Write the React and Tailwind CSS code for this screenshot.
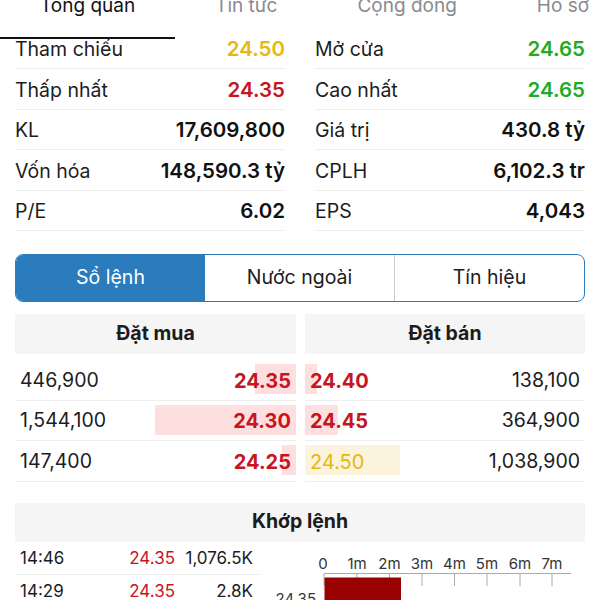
import React from "react";

const RED = "text-[#c8141e]";

function StatCell({ label, value, color, first }) {
  return (
    <div
      className={`flex justify-between items-center border-b border-[#eeeeee] ${
        first ? "h-[30px] pb-[8px]" : "h-[40.5px] pt-[3px]"
      }`}
    >
      <span className="text-[19.5px] text-[#1c1c1e]">{label}</span>
      <span className={`text-[20.5px] font-semibold ${color || "text-[#111111]"}`}>{value}</span>
    </div>
  );
}

function BookRow({ bv, bp, bw, bc, sp, sv, sw, sc, sbg }) {
  return (
    <div className="grid grid-cols-[281px_280px] gap-x-[9px]">
      <div className="relative h-[40.5px] border-b border-[#eeeeee] flex items-start">
        <div className="absolute right-0 top-[4px] h-[30px] bg-[#fddfe0]" style={{ width: bw }} />
        <div className="relative flex justify-between items-center w-full h-[38px] pt-[3px] px-[5px]">
          <span className="text-[19.5px] text-[#1c1c1e]">{bv}</span>
          <span className={`text-[20px] font-bold ${bc}`}>{bp}</span>
        </div>
      </div>
      <div className="relative h-[40.5px] border-b border-[#eeeeee] flex items-start">
        <div className={`absolute left-0 top-[4px] h-[30px] ${sbg}`} style={{ width: sw }} />
        <div className="relative flex justify-between items-center w-full h-[38px] pt-[3px] px-[5px]">
          <span className={`text-[20px] ${sc}`}>{sp}</span>
          <span className="text-[19.5px] text-[#1c1c1e]">{sv}</span>
        </div>
      </div>
    </div>
  );
}

function Chart() {
  const ticks = [64, 97, 129.5, 162, 194.5, 227, 260, 292];
  const labels = ["0", "1m", "2m", "3m", "4m", "5m", "6m", "7m"];
  return (
    <svg width="340" height="59" viewBox="0 0 340 59" className="block">
      {labels.map((l, i) => (
        <text
          key={l}
          x={ticks[i] - (i === 0 ? 1 : 0)}
          y="27"
          textAnchor="middle"
          fontSize="15"
          fill="#333"
          fontFamily="Inter, sans-serif"
        >
          {l}
        </text>
      ))}
      <line x1="64" y1="31.5" x2="311" y2="31.5" stroke="#aaa" strokeWidth="1" />
      {ticks.map((t) => (
        <line key={t} x1={t} y1="31.5" x2={t} y2="44" stroke="#aaa" strokeWidth="1" />
      ))}
      <rect x="64.5" y="35.5" width="76.5" height="30" fill="#990000" />
      <text x="56" y="62" textAnchor="end" fontSize="15" fill="#333" fontFamily="Inter, sans-serif">
        24.35
      </text>
    </svg>
  );
}

export default function App() {
  const tabs = [
    { t: "Tổng quan", active: true },
    { t: "Tin tức" },
    { t: "Cộng đồng" },
    { t: "Hồ sơ" },
  ];
  return (
    <div className="w-[600px] h-[600px] overflow-hidden bg-white font-['Inter',sans-serif] text-[#1c1c1e]">
      <div className="flex h-[39px]">
        {tabs.map((tab) => (
          <div key={tab.t} className="flex flex-col shrink-0">
            <div
              className={`px-10 -mt-[6px] leading-[24px] text-[19px] whitespace-nowrap ${
                tab.active ? "text-[#111111]" : "text-[#8a8a8e]"
              }`}
            >
              {tab.t}
            </div>
            <div className="flex-1" />
            <div className={`h-[2px] ${tab.active ? "bg-[#111111]" : "bg-transparent"}`} />
          </div>
        ))}
      </div>

      <div className="grid grid-cols-2 gap-x-[30px] px-[15px]">
        <StatCell first label="Tham chiếu" value="24.50" color="text-[#e5b80b]" />
        <StatCell first label="Mở cửa" value="24.65" color="text-[#1fac24]" />
        <StatCell label="Thấp nhất" value="24.35" color={RED} />
        <StatCell label="Cao nhất" value="24.65" color="text-[#1fac24]" />
        <StatCell label="KL" value="17,609,800" />
        <StatCell label="Giá trị" value="430.8 tỷ" />
        <StatCell label="Vốn hóa" value="148,590.3 tỷ" />
        <StatCell label="CPLH" value="6,102.3 tr" />
        <StatCell label="P/E" value="6.02" />
        <StatCell label="EPS" value="4,043" />
      </div>

      <div className="mx-[15px] mt-[23px] h-[48px] flex rounded-[8px] border border-[#2b7cbc] overflow-hidden">
        <div className="w-[189px] bg-[#2b7cbc] text-white flex items-center justify-center text-[19.5px]">
          Sổ lệnh
        </div>
        <div className="flex-1 flex items-center justify-center text-[19.5px] text-[#1c1c1e] border-r border-[#cccccc]">
          Nước ngoài
        </div>
        <div className="flex-1 flex items-center justify-center text-[19.5px] text-[#1c1c1e]">
          Tín hiệu
        </div>
      </div>

      <div className="px-[15px] mt-[12px] grid grid-cols-[281px_280px] gap-x-[9px]">
        <div className="h-[40px] bg-[#f5f5f5] flex items-center justify-center text-[19.5px] font-bold text-[#1c1c1e]">
          Đặt mua
        </div>
        <div className="h-[40px] bg-[#f5f5f5] flex items-center justify-center text-[19.5px] font-bold text-[#1c1c1e]">
          Đặt bán
        </div>
      </div>

      <div className="px-[15px] mt-[6px]">
        <BookRow bv="446,900" bp="24.35" bw={41} bc={RED} sp="24.40" sv="138,100" sw={12} sc={`font-bold ${RED}`} sbg="bg-[#fddfe0]" />
        <BookRow bv="1,544,100" bp="24.30" bw={141} bc={RED} sp="24.45" sv="364,900" sw={33} sc={`font-bold ${RED}`} sbg="bg-[#fddfe0]" />
        <BookRow bv="147,400" bp="24.25" bw={14} bc={RED} sp="24.50" sv="1,038,900" sw={95} sc="text-[#e5b80b]" sbg="bg-[#fbf3db]" />
      </div>

      <div className="mx-[15px] mt-[21px] h-[39px] bg-[#f5f5f5] flex items-center justify-center text-[19.5px] font-bold text-[#1c1c1e]">
        Khớp lệnh
      </div>

      <div className="flex">
        <div className="w-[245px] ml-[15px]">
          {[
            ["14:46", "24.35", "1,076.5K"],
            ["14:29", "24.35", "2.8K"],
          ].map((r) => (
            <div key={r[0]} className="h-[33px] border-b border-[#eeeeee] flex items-center pt-[3px] pl-[5px] pr-[7px] text-[17px]">
              <span className="flex-1 text-[#1c1c1e]">{r[0]}</span>
              <span className="text-[#c8141e]">{r[1]}</span>
              <span className="w-[78px] text-right text-[#1c1c1e]">{r[2]}</span>
            </div>
          ))}
        </div>
        <Chart />
      </div>
    </div>
  );
}
